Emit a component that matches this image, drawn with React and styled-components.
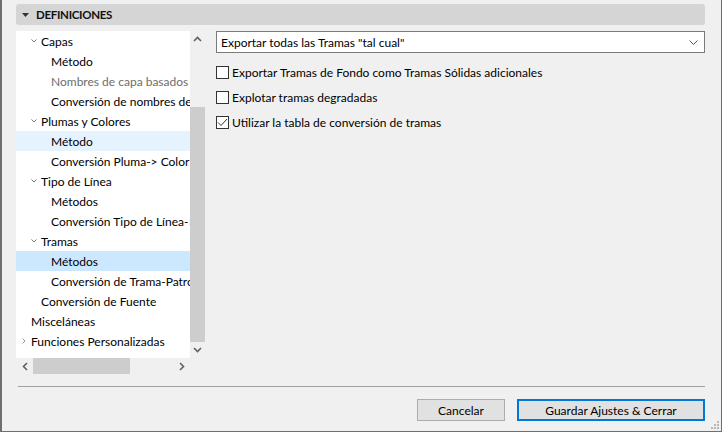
import React from "react";
import styled, { createGlobalStyle } from "styled-components";

const GlobalStyle = createGlobalStyle`
  html, body {
    margin: 0;
    padding: 0;
    background: #ffffff;
  }
  body {
    font-family: Lato, "Noto Sans", sans-serif;
    font-size: 12px;
    color: #000;
  }
`;

const Dialog = styled.div`
  position: relative;
  width: 722px;
  height: 432px;
  box-sizing: border-box;
  background: #f0f0f0;
  border-left: 2px solid #6f6f6f;
  border-right: 1px solid #6f6f6f;
  border-bottom: 1px solid #6f6f6f;
  padding: 4px 16px 0 14px;
  display: flex;
  flex-direction: column;
`;

const SectionHeader = styled.div`
  height: 21px;
  background: #d5d5d5;
  border-radius: 3px;
  display: flex;
  align-items: center;
  padding-left: 6px;
  gap: 7px;
  font-weight: 700;
  font-size: 11.5px;
  letter-spacing: -0.3px;
  color: #111;
`;

const Body = styled.div`
  display: flex;
  margin-top: 6px;
  height: 343px;
`;

const TreeFrame = styled.div`
  display: grid;
  grid-template-columns: 174px 15px;
  grid-template-rows: 327px 16px;
  flex-shrink: 0;
`;

const TreeList = styled.div`
  background: #ffffff;
  overflow: hidden;
`;

const TreeRow = styled.div`
  height: 20px;
  display: flex;
  align-items: center;
  padding-left: ${(p) => 5 + p.$level * 10}px;
  white-space: nowrap;
  background: ${(p) =>
    p.$selected === "active" ? "#cce8ff" : p.$selected === "hover" ? "#e5f3ff" : "transparent"};
  color: ${(p) => (p.$dim ? "#6d6d6d" : "#000")};
`;

const Expander = styled.span`
  width: 10px;
  flex-shrink: 0;
  display: flex;
  align-items: center;
`;

const VScroll = styled.div`
  display: flex;
  flex-direction: column;
  align-items: center;
`;

const ScrollArrow = styled.div`
  height: ${(p) => p.$h || 16}px;
  width: ${(p) => p.$w || 15}px;
  display: flex;
  align-items: center;
  justify-content: center;
  flex-shrink: 0;
`;

const VThumb = styled.div`
  width: 15px;
  margin-top: 60px;
  height: 235px;
  background: #cdcdcd;
`;

const HScroll = styled.div`
  display: flex;
  align-items: center;
`;

const HThumb = styled.div`
  width: 97px;
  height: 16px;
  background: #cdcdcd;
`;

const HTrack = styled.div`
  flex: 1;
`;

const RightPane = styled.div`
  flex: 1;
  margin-left: 11px;
  display: flex;
  flex-direction: column;
`;

const Select = styled.div`
  height: 22px;
  box-sizing: border-box;
  background: #ffffff;
  border: 1px solid #7a7a7a;
  display: flex;
  align-items: center;
  justify-content: space-between;
  padding: 0 6px 0 4px;
`;

const CheckList = styled.div`
  display: flex;
  flex-direction: column;
  gap: 12px;
  margin-top: 13px;
`;

const CheckRow = styled.label`
  display: flex;
  align-items: center;
  gap: 3px;
  height: 13px;
  white-space: nowrap;
`;

const Box = styled.span`
  width: 13px;
  height: 13px;
  box-sizing: border-box;
  border: 1px solid #333333;
  background: #ffffff;
  display: flex;
  align-items: center;
  justify-content: center;
  flex-shrink: 0;
`;

const Separator = styled.div`
  height: 1px;
  background: #a0a0a0;
  margin-top: 12px;
  margin-left: 2px;
`;

const Footer = styled.div`
  display: flex;
  justify-content: flex-end;
  gap: 12px;
  margin-top: 12px;
`;

const Button = styled.button`
  height: 22px;
  width: ${(p) => p.$w}px;
  box-sizing: border-box;
  font-family: inherit;
  font-size: 12px;
  color: #000;
  background: #e1e1e1;
  border: ${(p) => (p.$default ? "2px solid #0078d7" : "1px solid #adadad")};
  padding: 0;
`;

const Grip = styled.svg`
  position: absolute;
  right: 2px;
  bottom: 2px;
`;

const Chevron = ({ open }) => (
  <svg width="6" height="6" viewBox="0 0 6 6">
    {open ? (
      <polyline points="0.5,1.5 3,4 5.5,1.5" fill="none" stroke="#777" strokeWidth="1" />
    ) : (
      <polyline points="1.5,0.5 4,3 1.5,5.5" fill="none" stroke="#999" strokeWidth="1" />
    )}
  </svg>
);

const treeItems = [
  { label: "Capas", level: 1, exp: "open" },
  { label: "Método", level: 2 },
  { label: "Nombres de capa basados en", level: 2, dim: true },
  { label: "Conversión de nombres de capa", level: 2 },
  { label: "Plumas y Colores", level: 1, exp: "open" },
  { label: "Método", level: 2, sel: "hover" },
  { label: "Conversión Pluma-> Color", level: 2 },
  { label: "Tipo de Línea", level: 1, exp: "open" },
  { label: "Métodos", level: 2 },
  { label: "Conversión Tipo de Línea->", level: 2 },
  { label: "Tramas", level: 1, exp: "open" },
  { label: "Métodos", level: 2, sel: "active" },
  { label: "Conversión de Trama-Patrón", level: 2 },
  { label: "Conversión de Fuente", level: 1 },
  { label: "Misceláneas", level: 0 },
  { label: "Funciones Personalizadas", level: 0, exp: "closed" },
];

const options = [
  { label: "Exportar Tramas de Fondo como Tramas Sólidas adicionales", checked: false },
  { label: "Explotar tramas degradadas", checked: false },
  { label: "Utilizar la tabla de conversión de tramas", checked: true },
];

export default function App() {
  return (
    <>
      <GlobalStyle />
      <Dialog>
        <SectionHeader>
          <svg width="7" height="4" viewBox="0 0 7 4">
            <polygon points="0,0 7,0 3.5,4" fill="#333" />
          </svg>
          DEFINICIONES
        </SectionHeader>
        <Body>
          <TreeFrame>
            <TreeList>
              {treeItems.map((it, i) => (
                <TreeRow key={i} $level={it.level} $selected={it.sel} $dim={it.dim}>
                  <Expander>{it.exp && <Chevron open={it.exp === "open"} />}</Expander>
                  {it.label}
                </TreeRow>
              ))}
            </TreeList>
            <VScroll>
              <ScrollArrow>
                <svg width="9" height="6" viewBox="0 0 9 6">
                  <polyline points="1,5 4.5,1.5 8,5" fill="none" stroke="#606060" strokeWidth="1.6" />
                </svg>
              </ScrollArrow>
              <VThumb />
              <ScrollArrow>
                <svg width="9" height="6" viewBox="0 0 9 6">
                  <polyline points="1,1 4.5,4.5 8,1" fill="none" stroke="#606060" strokeWidth="1.6" />
                </svg>
              </ScrollArrow>
            </VScroll>
            <HScroll>
              <ScrollArrow $w={17}>
                <svg width="6" height="9" viewBox="0 0 6 9">
                  <polyline points="5,1 1.5,4.5 5,8" fill="none" stroke="#606060" strokeWidth="1.6" />
                </svg>
              </ScrollArrow>
              <HThumb />
              <HTrack />
              <ScrollArrow $w={17}>
                <svg width="6" height="9" viewBox="0 0 6 9">
                  <polyline points="1,1 4.5,4.5 1,8" fill="none" stroke="#606060" strokeWidth="1.6" />
                </svg>
              </ScrollArrow>
            </HScroll>
            <div />
          </TreeFrame>
          <RightPane>
            <Select>
              <span>Exportar todas las Tramas "tal cual"</span>
              <svg width="9" height="5" viewBox="0 0 9 5">
                <polyline points="0.5,0.5 4.5,4.5 8.5,0.5" fill="none" stroke="#555" strokeWidth="1" />
              </svg>
            </Select>
            <CheckList>
              {options.map((o, i) => (
                <CheckRow key={i}>
                  <Box>
                    {o.checked && (
                      <svg width="11" height="9" viewBox="0 0 11 9">
                        <polyline points="1,4.5 4,7.5 10,1" fill="none" stroke="#333" strokeWidth="1" />
                      </svg>
                    )}
                  </Box>
                  {o.label}
                </CheckRow>
              ))}
            </CheckList>
          </RightPane>
        </Body>
        <Separator />
        <Footer>
          <Button $w={88}>Cancelar</Button>
          <Button $w={188} $default>
            Guardar Ajustes &amp; Cerrar
          </Button>
        </Footer>
        <Grip width="9" height="9" viewBox="0 0 9 9">
          {[
            [7, 1],
            [7, 4],
            [4, 4],
            [7, 7],
            [4, 7],
            [1, 7],
          ].map(([x, y], i) => (
            <rect key={i} x={x} y={y} width="2" height="2" fill="#b8b8b8" />
          ))}
        </Grip>
      </Dialog>
    </>
  );
}
